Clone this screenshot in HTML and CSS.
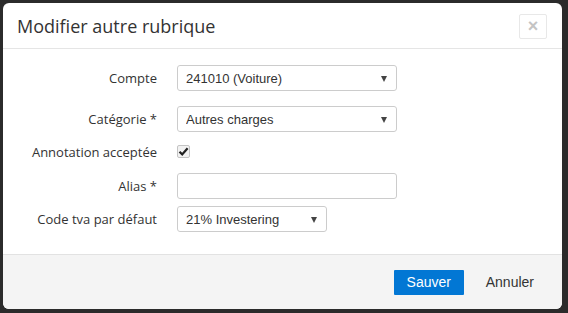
FILE: index.html
```html
<!DOCTYPE html>
<html lang="fr">
<head>
    <meta charset="UTF-8">
    <title>Modifier autre rubrique</title>
    <link rel="stylesheet" href="styles.css">
</head>
<body>
    <div class="modal">
        <div class="modal-header">
            <h4 class="modal-title">Modifier autre rubrique</h4>
            <button type="button" class="close-btn" aria-label="Fermer">&times;</button>
        </div>
        <form class="modal-body" autocomplete="off">
            <div class="form-row row-select">
                <label class="form-label">Compte</label>
                <div class="select-wrap">
                    <select class="form-control">
                        <option>241010 (Voiture)</option>
                    </select>
                </div>
            </div>
            <div class="form-row row-select2">
                <label class="form-label">Catégorie *</label>
                <div class="select-wrap">
                    <select class="form-control">
                        <option>Autres charges</option>
                    </select>
                </div>
            </div>
            <div class="form-row row-check">
                <label class="form-label">Annotation acceptée</label>
                <span class="checkbox">
                    <svg width="11" height="11" viewBox="0 0 11 11"><path d="M1.5 5.8 L4.2 8.4 L9.6 2.2" fill="none" stroke="#222" stroke-width="2.2"/></svg>
                </span>
            </div>
            <div class="form-row row-alias">
                <label class="form-label">Alias *</label>
                <input type="text" class="form-control">
            </div>
            <div class="form-row">
                <label class="form-label">Code tva par défaut</label>
                <div class="select-wrap select-small">
                    <select class="form-control">
                        <option>21% Investering</option>
                    </select>
                </div>
            </div>
        </form>
        <div class="modal-footer">
            <button type="button" class="btn btn-primary">Sauver</button>
            <button type="button" class="btn btn-link">Annuler</button>
        </div>
    </div>
</body>
</html>
```

FILE: styles.css
```css
html, body {
    margin: 0;
    padding: 0;
}
body {
    background: #2b2b2b;
    padding: 3px 6px 4px 3px;
    font-family: 'Open Sans', Arial, sans-serif;
    color: #333;
}
.modal {
    width: 559px;
    height: 306px;
    background: #fff;
    border-radius: 6px;
    overflow: hidden;
    display: flex;
    flex-direction: column;
}
.modal-header {
    height: 45px;
    border-bottom: 1px solid #e5e5e5;
    display: flex;
    align-items: center;
    justify-content: space-between;
    padding: 0 15px 0 14px;
}
.modal-title {
    margin: 0;
    font-size: 18px;
    font-weight: 400;
    color: #333;
}
.close-btn {
    width: 28px;
    height: 25px;
    margin-top: 1px;
    background: #fff;
    border: 1px solid #e8e8e8;
    border-radius: 2px;
    color: #c4c4c4;
    font-size: 18px;
    font-weight: 700;
    line-height: 1;
    padding: 0;
    font-family: Arial, sans-serif;
}
.modal-body {
    flex: 1;
    margin: 0;
    padding: 16px 0 0 0;
}
.form-row {
    display: flex;
    align-items: center;
    height: 26px;
}
.row-select {
    margin-bottom: 15px;
}
.row-select2 {
    margin-bottom: 8px;
}
.row-check {
    height: 24px;
    margin-bottom: 9px;
}
.row-alias {
    margin-bottom: 7px;
}
.form-label {
    width: 154px;
    text-align: right;
    font-size: 13px;
    margin-right: 20px;
    color: #333;
}
.form-control {
    box-sizing: border-box;
    width: 220px;
    height: 26px;
    border: 1px solid #ccc;
    border-radius: 3px;
    background: #fff;
    font-family: Arial, 'Liberation Sans', sans-serif;
    font-size: 13px;
    color: #333;
    padding: 0 8px;
    margin: 0;
}
select.form-control {
    appearance: none;
    -webkit-appearance: none;
}
.select-wrap {
    position: relative;
    width: 220px;
}
.select-wrap::after {
    content: "";
    position: absolute;
    right: 10px;
    top: 11px;
    border-left: 3.5px solid transparent;
    border-right: 3.5px solid transparent;
    border-top: 6px solid #444;
    pointer-events: none;
}
.select-small {
    width: 150px;
}
.select-small .form-control {
    width: 150px;
}
.checkbox {
    box-sizing: border-box;
    width: 13px;
    height: 13px;
    border: 1px solid #c4c4c4;
    border-radius: 2px;
    background: #f2f2f2;
    display: flex;
    align-items: center;
    justify-content: center;
    margin-top: -1px;
}
.modal-footer {
    height: 55px;
    background: #f4f4f4;
    border-top: 1px solid #e2e2e2;
    display: flex;
    align-items: center;
    justify-content: flex-end;
    padding-right: 16px;
    box-sizing: border-box;
}
.btn {
    font-family: Arial, 'Liberation Sans', sans-serif;
    font-size: 14px;
    height: 25px;
    border: none;
    padding: 0 12px;
    cursor: pointer;
}
.btn-primary {
    width: 70px;
    background: #0277d4;
    color: #fff;
    border-radius: 1px;
    margin-right: 10px;
}
.btn-link {
    background: none;
    color: #333;
}
```
